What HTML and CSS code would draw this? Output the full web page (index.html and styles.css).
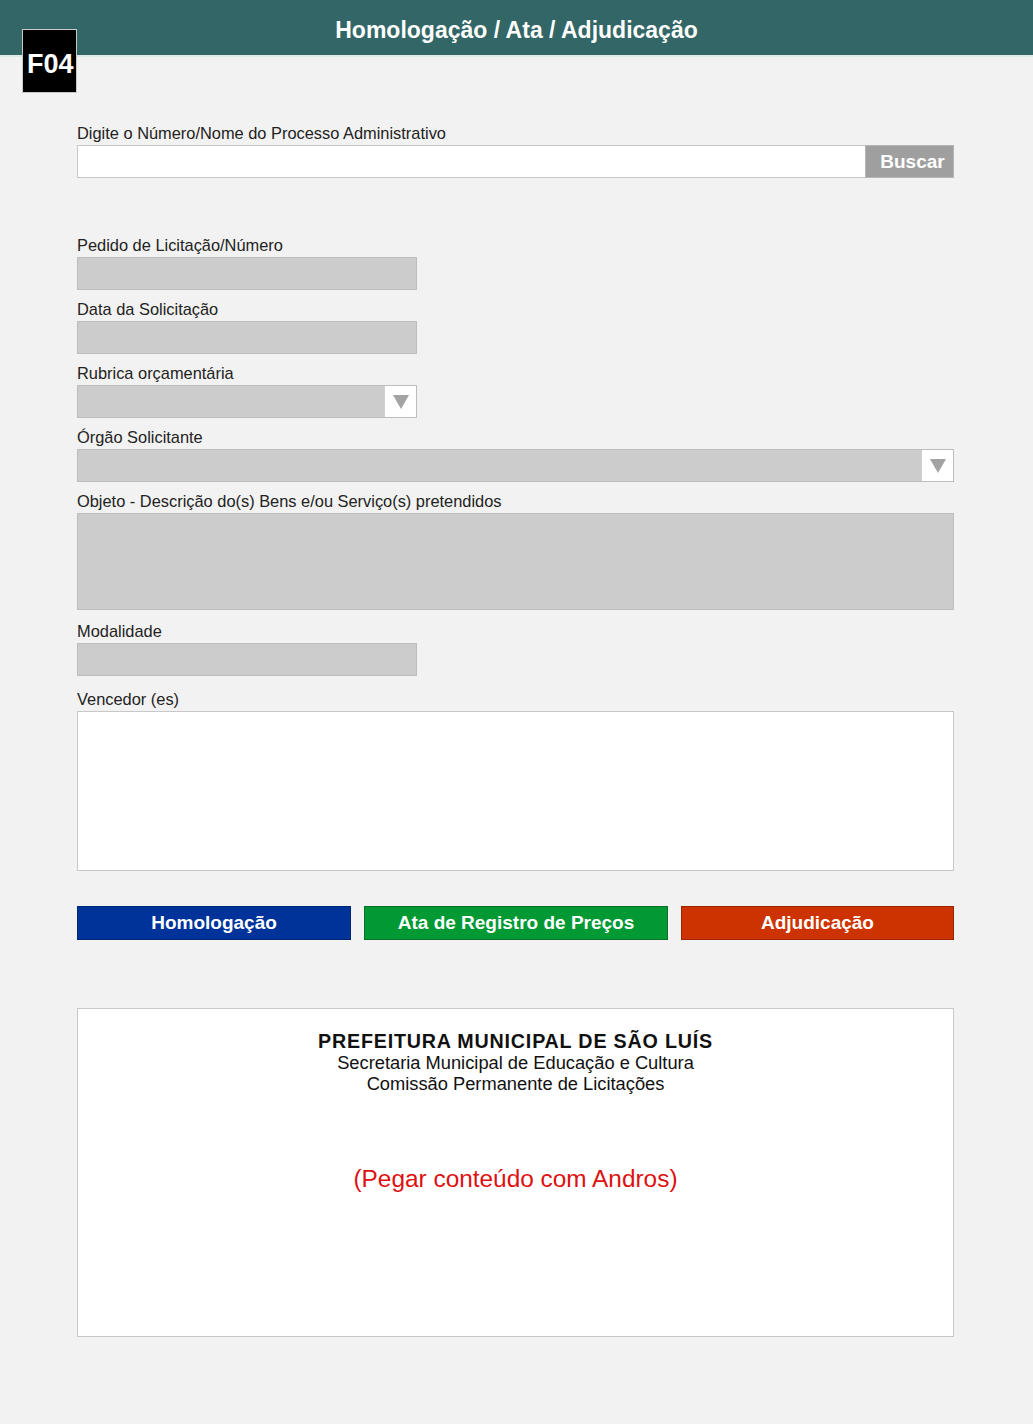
FILE: index.html
```html
<!DOCTYPE html>
<html lang="pt">
<head>
<meta charset="utf-8">
<title>Homologação / Ata / Adjudicação</title>
<link rel="stylesheet" href="styles.css">
</head>
<body>
<header class="topbar">
  <h1 class="title">Homologação / Ata / Adjudicação</h1>
  <div class="badge">F04</div>
</header>
<main class="content">
  <section class="search">
    <label class="label">Digite o Número/Nome do Processo Administrativo</label>
    <div class="search-row">
      <div class="search-input"></div>
      <div class="search-btn">Buscar</div>
    </div>
  </section>

  <section class="form">
    <div class="group">
      <label class="label">Pedido de Licitação/Número</label>
      <div class="field short"></div>
    </div>
    <div class="group">
      <label class="label">Data da Solicitação</label>
      <div class="field short"></div>
    </div>
    <div class="group">
      <label class="label">Rubrica orçamentária</label>
      <div class="field short select">
        <span class="arrow"><svg width="16" height="14" viewBox="0 0 16 14"><polygon points="0,0 16,0 8,14" fill="#a3a3a3"/></svg></span>
      </div>
    </div>
    <div class="group">
      <label class="label">Órgão Solicitante</label>
      <div class="field select">
        <span class="arrow"><svg width="16" height="14" viewBox="0 0 16 14"><polygon points="0,0 16,0 8,14" fill="#a3a3a3"/></svg></span>
      </div>
    </div>
    <div class="group">
      <label class="label">Objeto - Descrição do(s) Bens e/ou Serviço(s) pretendidos</label>
      <div class="field area"></div>
    </div>
    <div class="group modal">
      <label class="label">Modalidade</label>
      <div class="field short"></div>
    </div>
    <div class="group winners">
      <label class="label">Vencedor (es)</label>
      <div class="white-box"></div>
    </div>
  </section>

  <div class="actions">
    <div class="btn blue">Homologação</div>
    <div class="btn green">Ata de Registro de Preços</div>
    <div class="btn red">Adjudicação</div>
  </div>

  <section class="doc">
    <div class="doc-head">
      <div class="doc-title">PREFEITURA MUNICIPAL DE SÃO LUÍS</div>
      <div class="doc-sub">Secretaria Municipal de Educação e Cultura</div>
      <div class="doc-sub">Comissão Permanente de Licitações</div>
    </div>
    <div class="doc-note">(Pegar conteúdo com Andros)</div>
  </section>
</main>
</body>
</html>
```

FILE: styles.css
```css
* { box-sizing: border-box; }
html, body { margin: 0; padding: 0; }
body {
  background: #f2f2f2;
  font-family: "Liberation Sans", Arial, sans-serif;
  color: #222;
  width: 1033px;
  min-height: 1424px;
}
.topbar {
  position: relative;
  height: 57px;
  background: #336666;
  border-bottom: 2px solid #dde8e8;
  display: flex;
  justify-content: center;
  align-items: flex-start;
}
.title {
  margin: 16px 0 0 0;
  font-size: 23px;
  line-height: 28px;
  font-weight: bold;
  color: #fff;
}
.badge {
  position: absolute;
  left: 22px;
  top: 29px;
  width: 55px;
  height: 64px;
  background: #000;
  border: 1px solid #c8c8c8;
  color: #fff;
  font-weight: bold;
  font-size: 27px;
  line-height: 28px;
  padding-top: 20px;
  padding-left: 4px;
}
.content {
  padding: 0 79px 0 77px;
}
.label {
  display: block;
  font-size: 16.4px;
  line-height: 18px;
  color: #222;
  height: 18px;
}
.search { padding-top: 67px; }
.search .label { margin-bottom: 3px; }
.search-row {
  display: flex;
  height: 33px;
}
.search-input {
  flex: 1;
  background: #fff;
  border: 1px solid #c8c8c8;
  border-right: none;
}
.search-btn {
  width: 89px;
  background: #9f9f9f;
  border: 1px solid #b5b5b5;
  color: #fff;
  font-weight: bold;
  font-size: 19px;
  line-height: 31px;
  text-align: center;
  padding-left: 6px;
}
.form {
  padding-top: 58px;
  display: flex;
  flex-direction: column;
  gap: 10px;
}
.group {
  display: flex;
  flex-direction: column;
  gap: 3px;
}
.field {
  height: 33px;
  background: #cccccc;
  border: 1px solid #bdbdbd;
  position: relative;
  display: flex;
  justify-content: flex-end;
}
.field.short { width: 340px; }
.field.area { height: 97px; }
.arrow {
  width: 32px;
  height: 31px;
  background: #fff;
  border-left: 1px solid #d0d0d0;
  display: flex;
  align-items: center;
  justify-content: center;
}
.arrow svg { display: block; margin-top: 1px; }
.modal { margin-top: 2px; }
.winners { margin-top: 4px; }
.white-box {
  height: 160px;
  background: #fff;
  border: 1px solid #c8c8c8;
}
.actions {
  display: flex;
  gap: 13px;
  margin-top: 35px;
}
.btn {
  height: 34px;
  color: #fff;
  font-weight: bold;
  font-size: 19px;
  line-height: 32px;
  text-align: center;
  border: 1px solid rgba(0,0,0,0.25);
}
.btn.blue { background: #003399; width: 274px; }
.btn.green { background: #009933; width: 304px; }
.btn.red { background: #cc3300; flex: 1; }
.doc {
  margin-top: 68px;
  height: 329px;
  background: #fff;
  border: 1px solid #c8c8c8;
  text-align: center;
  color: #111;
}
.doc-head { padding-top: 21px; }
.doc-title {
  font-weight: bold;
  font-size: 19.7px;
  line-height: 22px;
  letter-spacing: 0.8px;
}
.doc-sub {
  font-size: 18.3px;
  line-height: 21px;
}
.doc-note {
  margin-top: 71px;
  color: #dd1111;
  font-size: 24.4px;
  line-height: 28px;
}
```
